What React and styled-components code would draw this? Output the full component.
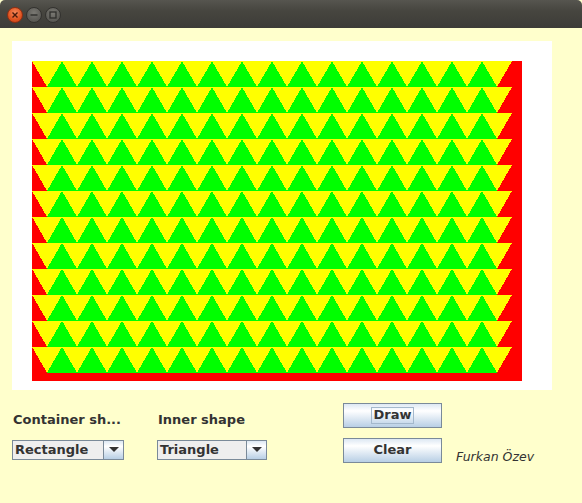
import React from "react";
import styled, { createGlobalStyle } from "styled-components";

const Global = createGlobalStyle`
  html, body { margin: 0; padding: 0; background: #ffffcc; }
  body { font-family: "DejaVu Sans", "Liberation Sans", sans-serif; }
`;

const Window = styled.div`
  width: 582px;
  height: 503px;
  background: #ffffcc;
  display: flex;
  flex-direction: column;
  overflow: hidden;
`;

const TitleBar = styled.div`
  height: 28px;
  flex: none;
  background: linear-gradient(#56554f, #46453f 40%, #3d3c38);
  border-radius: 5px 5px 0 0;
  display: flex;
  align-items: center;
  gap: 3px;
  padding-left: 7px;
  box-sizing: border-box;
`;

const WinButton = styled.div`
  width: 16px;
  height: 16px;
  border-radius: 50%;
  box-sizing: border-box;
  display: flex;
  align-items: center;
  justify-content: center;
  margin-top: 1px;
  background: ${(p) =>
    p.$close
      ? "radial-gradient(circle at 50% 35%, #f78a5c, #e0531f 60%, #c4401a)"
      : "radial-gradient(circle at 50% 35%, #7a7973, #5f5e59 60%, #4f4e4a)"};
  border: 1px solid ${(p) => (p.$close ? "#8f2f13" : "#33322f")};
`;

const Content = styled.div`
  flex: 1;
  display: flex;
  flex-direction: column;
  padding: 13px 0 0 12px;
`;

const Canvas = styled.svg`
  display: block;
  width: 540px;
  height: 349px;
  background: #ffffff;
`;

const Controls = styled.div`
  display: flex;
  margin-top: 13px;
`;

const Column = styled.div`
  width: ${(p) => p.$w}px;
  flex: none;
  display: flex;
  flex-direction: column;
`;

const Label = styled.div`
  font: bold 13px/16px "DejaVu Sans", sans-serif;
  color: #333333;
  margin: 9px 0 12px 1px;
  white-space: nowrap;
`;

const Combo = styled.div`
  width: ${(p) => p.$w}px;
  height: 20px;
  box-sizing: border-box;
  border: 1px solid #7a8a99;
  display: flex;
  background: #eeeeee;
`;

const ComboText = styled.div`
  flex: 1;
  font: bold 13px/18px "DejaVu Sans", sans-serif;
  color: #333333;
  padding-left: 2px;
  border-right: 1px solid #7a8a99;
`;

const ComboArrow = styled.div`
  width: 19px;
  flex: none;
  background: linear-gradient(#dde8f3 0%, #ffffff 30%, #b8cfe5 100%);
  display: flex;
  align-items: center;
  justify-content: center;
`;

const Button = styled.div`
  width: 99px;
  height: 25px;
  box-sizing: border-box;
  border: 1px solid #7a8a99;
  background: linear-gradient(#dde8f3 0%, #ffffff 30%, #b8cfe5 100%);
  display: flex;
  align-items: center;
  justify-content: center;
  margin-bottom: ${(p) => (p.$mb ? p.$mb : 0)}px;
`;

const ButtonText = styled.span`
  font: bold 13px/14px "DejaVu Sans", sans-serif;
  color: #333333;
  padding: 0 2px 1px;
  border: 1px solid ${(p) => (p.$focus ? "#a3b8cc" : "transparent")};
`;

const Author = styled.div`
  font: oblique 12.5px/16px "DejaVu Sans", sans-serif;
  color: #333333;
  margin: 46px 0 0 14px;
  white-space: nowrap;
`;

const H = 15 * Math.sqrt(3);

function Drawing() {
  const rows = [];
  for (let r = 0; r < 12; r++) {
    const y0 = 20 + r * H;
    const y1 = y0 + H;
    for (let k = 0; k < 16; k++) {
      const x = 20 + 30 * k;
      rows.push(
        <polygon
          key={`y${r}-${k}`}
          points={`${x},${y0} ${x + 30},${y0} ${x + 15},${y1}`}
          fill="#ffff00"
        />
      );
    }
    for (let k = 0; k < 15; k++) {
      const x = 35 + 30 * k;
      rows.push(
        <polygon
          key={`g${r}-${k}`}
          points={`${x},${y1} ${x + 30},${y1} ${x + 15},${y0}`}
          fill="#00ff00"
        />
      );
    }
  }
  return (
    <Canvas viewBox="0 0 540 349" shapeRendering="crispEdges">
      <rect x="20" y="20" width="490" height="320" fill="#ff0000" />
      {rows}
    </Canvas>
  );
}

export default function App() {
  return (
    <>
      <Global />
      <Window>
        <TitleBar>
          <WinButton $close>
            <svg width="8" height="8" viewBox="0 0 8 8">
              <path d="M1.5 1.5 L6.5 6.5 M6.5 1.5 L1.5 6.5" stroke="#4a1a0a" strokeWidth="1.4" />
            </svg>
          </WinButton>
          <WinButton>
            <svg width="8" height="8" viewBox="0 0 8 8">
              <path d="M0.5 4 L7.5 4" stroke="#2f2e2b" strokeWidth="1.4" />
            </svg>
          </WinButton>
          <WinButton>
            <svg width="8" height="8" viewBox="0 0 8 8">
              <rect x="1" y="1" width="6" height="6" fill="none" stroke="#2f2e2b" strokeWidth="1.3" />
            </svg>
          </WinButton>
        </TitleBar>
        <Content>
          <Drawing />
          <Controls>
            <Column $w={145}>
              <Label>Container sh...</Label>
              <Combo $w={112}>
                <ComboText>Rectangle</ComboText>
                <ComboArrow>
                  <svg width="10" height="6" viewBox="0 0 10 6">
                    <polygon points="0,0 10,0 5,5" fill="#333333" />
                  </svg>
                </ComboArrow>
              </Combo>
            </Column>
            <Column $w={186}>
              <Label>Inner shape</Label>
              <Combo $w={110}>
                <ComboText>Triangle</ComboText>
                <ComboArrow>
                  <svg width="10" height="6" viewBox="0 0 10 6">
                    <polygon points="0,0 10,0 5,5" fill="#333333" />
                  </svg>
                </ComboArrow>
              </Combo>
            </Column>
            <Column $w={99}>
              <Button $mb={10}>
                <ButtonText $focus>Draw</ButtonText>
              </Button>
              <Button>
                <ButtonText>Clear</ButtonText>
              </Button>
            </Column>
            <Author>Furkan Özev</Author>
          </Controls>
        </Content>
      </Window>
    </>
  );
}
